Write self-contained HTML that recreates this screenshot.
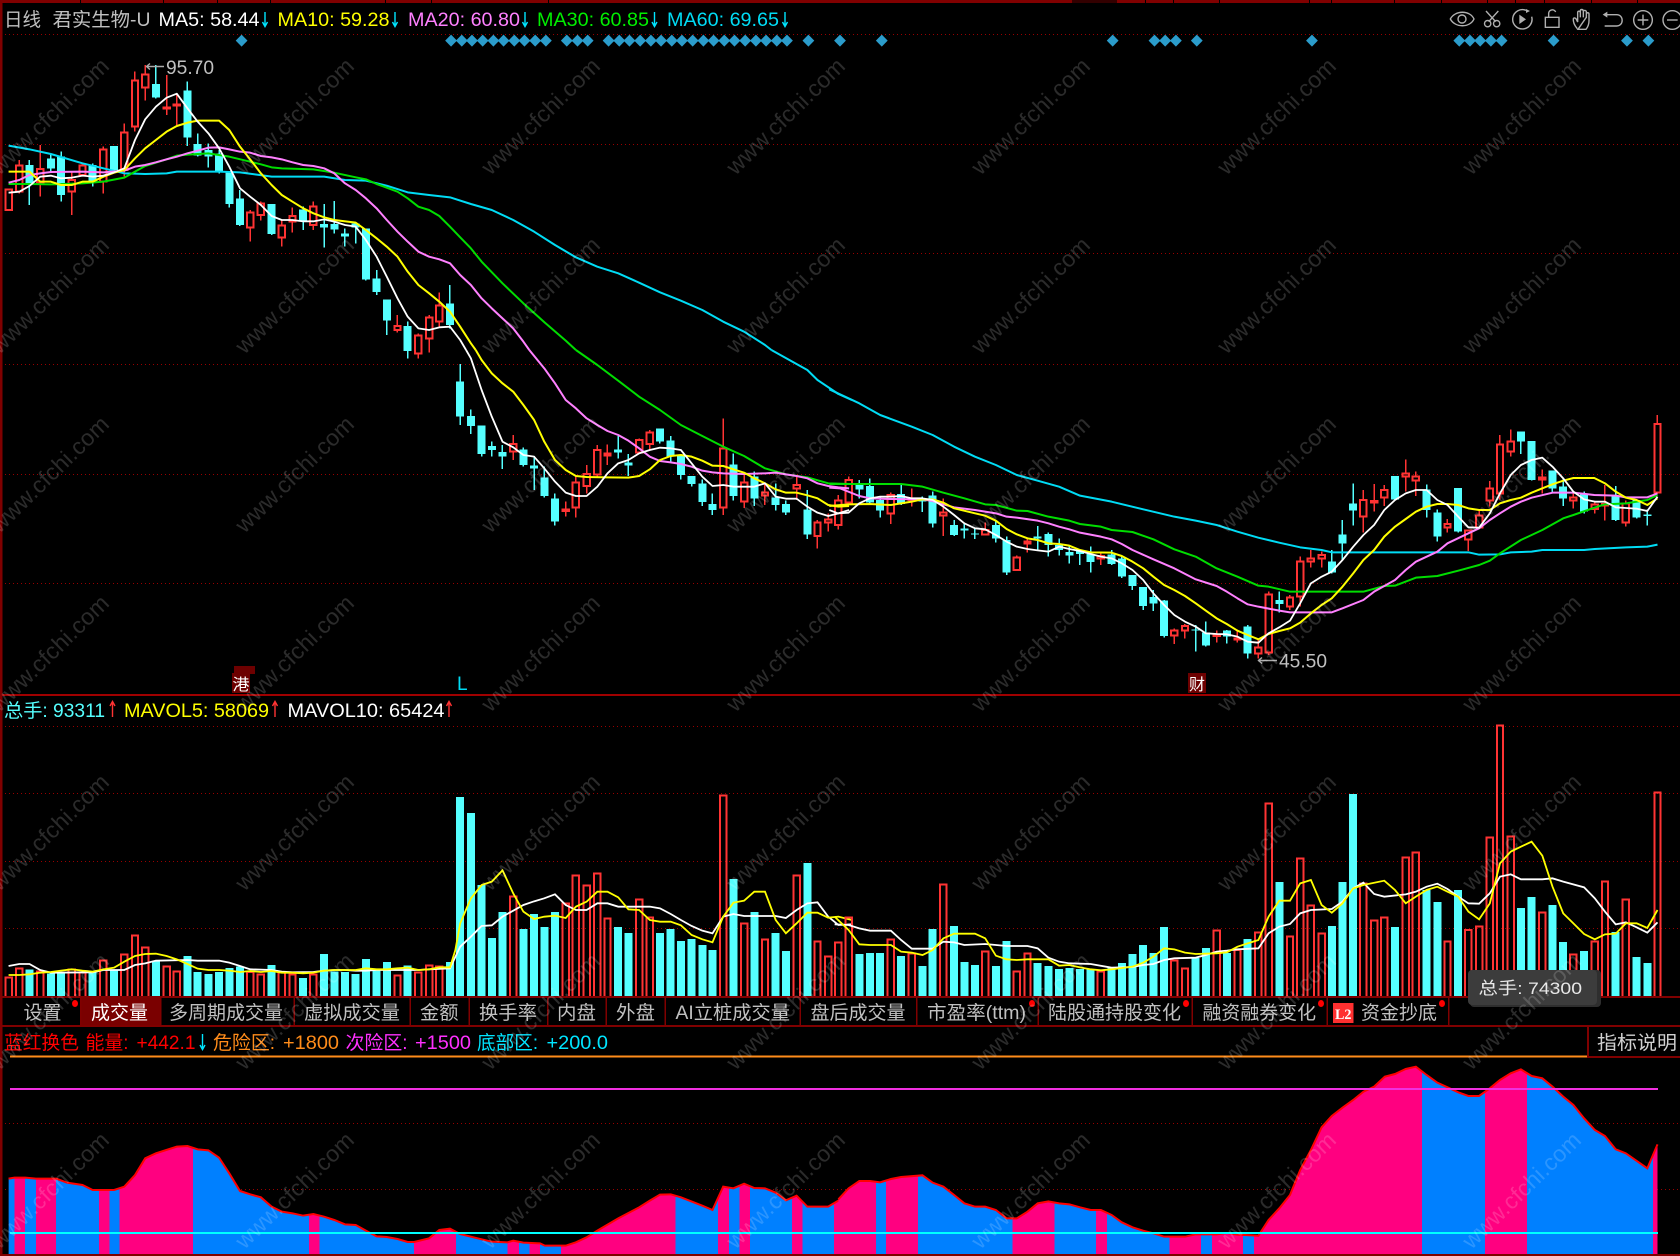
<!DOCTYPE html>
<html lang="zh-CN"><head><meta charset="utf-8"><title>日线 君实生物-U</title>
<style>
html,body{margin:0;padding:0;background:#000;width:1680px;height:1256px;overflow:hidden}
svg{display:block;font-family:"Liberation Sans","Noto Sans CJK SC",sans-serif}
svg *{vector-effect:non-scaling-stroke}
.n{fill:none}
.cw{fill:none;stroke:#55ffff;stroke-width:1.5}
.cb{fill:none;stroke:#55ffff;stroke-width:8}
.rw{fill:none;stroke:#ff3333;stroke-width:1.5}
.rb{fill:#000;stroke:#ff3333;stroke-width:2}
.vr{fill:none;stroke:#ff3333;stroke-width:2}
.wm{font-size:23px;fill:#fff;fill-opacity:.17;font-family:"Liberation Sans",sans-serif}
.tab{font-size:19px;fill:#c0c0c0}
.grid{stroke:#990000;stroke-width:1;stroke-dasharray:1 3;fill:none}
.bd{fill:#800000}
.ic{fill:none;stroke:#b0b0b0;stroke-width:1.4}
</style></head><body>
<svg xmlns="http://www.w3.org/2000/svg" width="1680" height="1256" viewBox="0 0 1680 1256">
<rect width="1680" height="1256" fill="#000"/>

<!-- grid -->
<path class="grid" d="M5 34.5H1678M5 144.5H1678M5 253.5H1678M5 364.5H1678M5 474.5H1678M5 583.5H1678M5 726.5H1678M5 793.5H1678M5 861.5H1678M5 928.5H1678M5 1123.5H1678M5 1189.5H1678"/>

<!-- borders -->
<rect class="bd" x="0" y="0" width="1680" height="3"/>
<rect x="80" y="0" width="1" height="3" fill="#000"/><rect x="163" y="0" width="1" height="3" fill="#000"/><rect x="217" y="0" width="1" height="3" fill="#000"/><rect x="270" y="0" width="1" height="3" fill="#000"/><rect x="385" y="0" width="1" height="3" fill="#000"/><rect x="431" y="0" width="1" height="3" fill="#000"/><rect x="548" y="0" width="1" height="3" fill="#000"/><rect x="1072" y="0" width="45" height="3" fill="#300"/><rect x="1145" y="0" width="1" height="3" fill="#000"/><rect x="1173" y="0" width="1" height="3" fill="#000"/><rect x="1219" y="0" width="1" height="3" fill="#000"/><rect x="1309" y="0" width="1" height="3" fill="#000"/><rect x="1331" y="0" width="1" height="3" fill="#000"/><rect x="1394" y="0" width="1" height="3" fill="#000"/><rect x="1441" y="0" width="1" height="3" fill="#000"/><rect x="1487" y="0" width="1" height="3" fill="#000"/><rect x="1515" y="0" width="1" height="3" fill="#000"/><rect x="1544" y="0" width="1" height="3" fill="#000"/><rect x="1591" y="0" width="1" height="3" fill="#000"/><rect x="1637" y="0" width="1" height="3" fill="#000"/>

<!-- diamonds -->
<g transform="scale(.535714,.333333)" fill="#2b9ccb"><path d="M451 104l11 18-11 18-11-18zM842 104l11 18-11 18-11-18zM862 104l11 18-11 18-11-18zM881 104l11 18-11 18-11-18zM901 104l11 18-11 18-11-18zM921 104l11 18-11 18-11-18zM940 104l11 18-11 18-11-18zM960 104l11 18-11 18-11-18zM979 104l11 18-11 18-11-18zM999 104l11 18-11 18-11-18zM1019 104l11 18-11 18-11-18zM1058 104l11 18-11 18-11-18zM1078 104l11 18-11 18-11-18zM1097 104l11 18-11 18-11-18zM1136 104l11 18-11 18-11-18zM1156 104l11 18-11 18-11-18zM1175 104l11 18-11 18-11-18zM1195 104l11 18-11 18-11-18zM1215 104l11 18-11 18-11-18zM1234 104l11 18-11 18-11-18zM1254 104l11 18-11 18-11-18zM1273 104l11 18-11 18-11-18zM1293 104l11 18-11 18-11-18zM1313 104l11 18-11 18-11-18zM1332 104l11 18-11 18-11-18zM1352 104l11 18-11 18-11-18zM1371 104l11 18-11 18-11-18zM1391 104l11 18-11 18-11-18zM1411 104l11 18-11 18-11-18zM1430 104l11 18-11 18-11-18zM1450 104l11 18-11 18-11-18zM1469 104l11 18-11 18-11-18zM1509 104l11 18-11 18-11-18zM1568 104l11 18-11 18-11-18z"/></g>
<g transform="translate(840,0) scale(.535714,.333333)" fill="#2b9ccb"><path d="M78 104l11 18-11 18-11-18zM509 104l11 18-11 18-11-18zM587 104l11 18-11 18-11-18zM607 104l11 18-11 18-11-18zM627 104l11 18-11 18-11-18zM666 104l11 18-11 18-11-18zM881 104l11 18-11 18-11-18zM1156 104l11 18-11 18-11-18zM1176 104l11 18-11 18-11-18zM1195 104l11 18-11 18-11-18zM1215 104l11 18-11 18-11-18zM1235 104l11 18-11 18-11-18zM1332 104l11 18-11 18-11-18zM1469 104l11 18-11 18-11-18zM1509 104l11 18-11 18-11-18z"/></g>

<!-- candles tile 1 -->
<g transform="scale(.535714,.333333)" shape-rendering="crispEdges">
<path class="cw" d="M55 480V615M95 460V515M114 455V605M173 490V560M213 438V515M291 195V295M350 245V438M369 400V470M389 430V503M409 450V520M428 515V622M448 570V678M507 612V705M566 620V690M605 612V743M624 603V700M644 685V740M664 675V730M683 685V842M703 810V885M722 898V1005M761 965V1075M840 855V985"/>
<path class="cb" d="M55 495V550M95 475V505M114 470V585M173 495V545M213 438V510M291 252V292M350 272V413M369 432V467M389 450V470M409 460V515M428 515V612M448 595V675M507 612V702M566 628V662M605 672V682M624 672V688M644 700V710M664 670V682M683 685V838M703 836V876M722 898V962M761 978V1053M840 910V975"/>
<path class="rw" d="M16 568V632M36 480V580M75 435V590M134 515V645M154 490V530M193 440V580M232 370V530M252 215V395M271 195V302M311 225V345M330 280V375M467 630V725M487 605V662M526 660V740M546 622V698M585 605V690M742 945V998M781 1000V1075M801 945V1058M820 878V980"/>
<path class="rb" d="M10 568h12V630h-12zM30 497h12V575h-12zM69 507h12V548h-12zM128 540h12V575h-12zM148 497h12V525h-12zM187 448h12V545h-12zM226 398h12V510h-12zM246 242h12V380h-12zM265 224h12V262h-12zM305 322h12V325h-12zM324 313h12V317h-12zM461 637h12V682h-12zM481 610h12V645h-12zM520 676h12V712h-12zM540 648h12V665h-12zM579 620h12V675h-12zM736 978h12V990h-12zM775 1007h12V1060h-12zM795 952h12V1015h-12zM814 917h12V965h-12z"/>
</g>
<!-- candles tile 3 -->
<g transform="translate(0,350) scale(.535714,.333333)" shape-rendering="crispEdges">
<path class="cw" d="M859 42V225M879 178V252M899 226V320M918 275V320M938 285V357M977 292V350M997 318V420M1016 350V442M1036 430V527M1154 258V325M1173 312V378M1232 235V280M1252 258V335M1271 318V388M1291 378V410M1311 388V468M1330 430V495M1369 310V452M1408 365V468M1448 400V482M1467 452V495M1507 420V567"/>
<path class="cb" d="M859 94V200M879 198V228M899 226V312M918 288V300M938 306V320M977 298V345M997 346V356M1016 382V438M1036 445V515M1154 298V308M1173 337V347M1232 235V275M1252 271V320M1271 318V375M1291 378V402M1311 400V456M1330 462V480M1369 343V438M1408 380V446M1448 442V465M1467 462V488M1507 478V553"/>
<path class="rw" d="M958 255V330M1056 455V500M1075 380V503M1095 345V430M1115 285V380M1134 283V345M1193 265V312M1213 240V300M1350 205V495M1389 375V474M1428 400V465M1487 380V450M1526 510V595M1546 490V545M1565 435V538"/>
<path class="rb" d="M952 282h12V305h-12zM1050 478h12V483h-12zM1069 397h12V472h-12zM1089 372h12V408h-12zM1109 300h12V373h-12zM1128 310h12V316h-12zM1187 270h12V308h-12zM1207 247h12V282h-12zM1344 295h12V472h-12zM1383 398h12V455h-12zM1422 427h12V437h-12zM1481 405h12V416h-12zM1520 517h12V558h-12zM1540 508h12V518h-12zM1559 452h12V525h-12z"/>
</g>
<!-- candles tile 4 -->
<g transform="translate(840,350) scale(.535714,.333333)" shape-rendering="crispEdges">
<path class="cw" d="M36 390V445M56 385V460M75 440V503M114 405V465M154 440V486M173 425V532M213 510V558M232 517V565M252 535V567M291 515V578M311 560V675M369 528V598M389 548V620M409 565V617M428 590V640M448 600V645M468 590V667M507 600V645M526 620V684M546 675V720M566 711V780M585 720V783M605 750V862M664 825V905M683 815V890M722 840V880M761 825V925M820 725V787M918 600V670M938 510V630M958 400V527M1036 378V450M1095 403V503M1115 478V575M1154 414V548M1271 244V312M1291 273V392M1330 362V430M1350 385V468M1389 425V490M1448 408V513M1487 450V505M1507 478V527"/>
<path class="cb" d="M36 405V418M56 408V458M75 450V482M114 432V462M154 448V455M173 437V520M213 525V555M232 535V542M252 550V553M291 525V565M311 570V668M369 560V566M389 552V585M409 585V600M428 606V616M448 603V612M468 612V636M507 613V642M526 625V680M546 675V708M566 711V768M585 741V760M605 752V858M664 838V842M683 847V887M722 842V860M761 830V910M820 750V762M918 634V667M938 553V580M958 460V482M1036 378V448M1095 418V480M1115 488V560M1154 414V545M1271 244V275M1291 273V390M1330 362V415M1350 410V446M1389 432V484M1448 438V510M1487 450V502M1507 494V498"/>
<path class="rw" d="M16 380V463M95 427V522M134 415V470M193 445V558M271 517V555M330 617V662M350 567V608M487 608V645M624 835V882M644 822V865M703 842V878M742 838V878M781 865V925M800 725V915M840 735V780M859 620V770M879 600V653M899 605V653M977 420V548M997 402V485M1016 405V468M1056 328V425M1075 365V438M1134 507V548M1173 540V603M1193 480V535M1213 393V470M1232 255V448M1252 238V320M1311 358V430M1369 425V475M1409 455V490M1428 405V512M1467 452V530M1526 195V430"/>
<path class="rb" d="M10 390h12V458h-12zM89 435h12V490h-12zM128 445h12V450h-12zM187 488h12V497h-12zM265 540h12V553h-12zM324 622h12V660h-12zM344 575h12V580h-12zM481 618h12V626h-12zM618 842h12V857h-12zM638 828h12V842h-12zM697 853h12V858h-12zM736 865h12V868h-12zM775 892h12V910h-12zM794 733h12V907h-12zM834 742h12V770h-12zM853 634h12V740h-12zM873 625h12V635h-12zM893 615h12V625h-12zM971 450h12V500h-12zM991 453h12V458h-12zM1010 420h12V442h-12zM1050 370h12V380h-12zM1069 380h12V392h-12zM1128 522h12V533h-12zM1167 542h12V568h-12zM1187 497h12V533h-12zM1207 415h12V452h-12zM1226 284h12V430h-12zM1246 275h12V305h-12zM1305 382h12V388h-12zM1363 442h12V452h-12zM1403 463h12V477h-12zM1422 462h12V467h-12zM1461 460h12V517h-12zM1520 222h12V427h-12z"/>
</g>

<!-- MA lines -->
<g transform="scale(.535714,.333333)" fill="none" stroke-linejoin="round">
<polyline stroke="#00dcf5" stroke-width="2" points="16,437 55,448 95,462 154,490 193,505 232,520 271,522 311,520 330,515 409,515 448,517 507,530 605,530 644,540 683,542 722,557 761,577 801,585 840,592 879,612 918,630 958,660 997,695 1036,735 1075,772 1115,800 1154,820 1193,848 1232,877 1271,902 1311,930 1350,965 1389,995 1428,1035 1440,1050"/>
<polyline stroke="#00dd00" stroke-width="2" points="16,552 55,552 95,553 154,550 193,545 232,533 252,515 271,498 291,488 311,478 330,467 350,464 389,460 428,470 467,485 487,493 507,502 526,505 585,508 624,518 664,532 683,538 703,552 742,575 761,595 781,620 801,630 820,648 840,680 859,712 879,745 899,785 938,850 977,910 1017,968 1056,1022 1075,1050"/>
<polyline stroke="#ff80ff" stroke-width="2" points="16,548 36,540 55,525 75,520 95,516 154,515 193,517 232,512 252,500 271,495 291,487 311,478 330,470 350,460 369,452 389,443 409,442 428,448 448,455 467,458 487,468 507,472 526,478 546,487 566,495 585,498 605,505 624,520 644,550 664,570 683,595 703,625 722,660 742,695 761,725 781,755 801,770 820,778 840,790 859,825 879,855 899,895 918,925 938,955 958,985 977,1025 988,1050"/>
<polyline stroke="#ffff00" stroke-width="2" points="16,515 55,515 75,545 95,545 114,555 134,555 154,545 173,545 193,530 213,518 232,510 252,475 271,445 291,420 311,395 330,378 350,368 369,362 409,362 428,390 448,440 467,478 487,520 507,555 526,585 546,605 566,625 585,640 605,652 624,660 664,668 683,690 703,715 722,740 742,770 761,815 781,855 801,880 820,905 840,935 859,980 879,1030 888,1050"/>
<polyline stroke="#ffffff" stroke-width="1.8" points="16,578 36,575 55,558 75,530 95,527 114,535 134,533 154,527 173,530 193,527 213,517 232,505 252,420 271,358 291,320 311,293 330,281 350,325 369,365 389,400 409,445 428,500 448,565 467,590 487,615 507,648 526,660 546,660 566,664 585,664 605,658 624,665 644,675 664,680 683,720 703,770 722,830 742,895 761,950 781,985 801,990 820,982 840,980 859,1020 870,1050"/>
</g>
<g transform="translate(0,350) scale(.535714,.333333)" fill="none" stroke-linejoin="round">
<polyline stroke="#00dcf5" stroke-width="2" points="1440,0 1507,60 1526,90 1565,132 1590,150"/>
<polyline stroke="#00dd00" stroke-width="2" points="1075,0 1115,45 1154,92 1193,140 1232,180 1271,225 1311,258 1350,290 1389,318 1428,355 1467,373 1507,382 1546,400 1585,402"/>
<polyline stroke="#ff80ff" stroke-width="2" points="988,0 1016,55 1036,100 1056,150 1075,175 1095,205 1115,225 1134,243 1154,255 1173,272 1193,295 1213,320 1232,333 1252,337 1271,342 1291,350 1311,362 1330,367 1350,370 1389,372 1428,370 1448,368 1467,373 1487,378 1507,385 1526,400 1546,408 1565,412 1585,415"/>
<polyline stroke="#ffff00" stroke-width="2" points="888,0 899,30 918,70 938,100 958,125 977,165 997,210 1016,275 1036,330 1056,360 1075,378 1095,381 1134,382 1173,383 1193,378 1213,358 1232,330 1252,318 1271,315 1291,320 1311,332 1330,347 1350,348 1369,358 1389,368 1408,385 1428,400 1448,418 1467,428 1487,428 1507,436 1526,445 1546,465 1565,470 1585,468"/>
<polyline stroke="#ffffff" stroke-width="1.8" points="870,0 879,25 899,120 918,200 938,275 958,292 977,315 997,320 1016,355 1036,395 1056,428 1075,438 1095,438 1115,410 1134,370 1154,340 1173,330 1193,310 1213,300 1232,293 1252,295 1271,300 1291,340 1311,380 1330,408 1350,405 1369,410 1408,410 1428,400 1448,440 1467,446 1487,446 1507,470 1526,488 1546,498 1565,490 1585,480"/>
</g>
<g transform="translate(840,350) scale(.535714,.333333)" fill="none" stroke-linejoin="round">
<polyline stroke="#00dcf5" stroke-width="2" points="-20,118 36,160 75,195 134,230 173,255 213,290 252,320 291,345 330,375 369,392 409,410 448,437 507,455 566,478 624,500 664,512 703,525 742,545 781,563 820,578 859,592 899,600 918,607 1173,607 1193,614 1232,613 1252,607 1291,605 1311,600 1389,600 1409,597 1467,592 1507,590 1526,584"/>
<polyline stroke="#00dd00" stroke-width="2" points="-20,402 114,402 154,410 193,428 232,445 271,463 291,465 330,482 350,483 389,500 428,512 448,522 487,530 507,540 546,546 585,568 624,598 664,620 703,655 742,680 781,707 800,710 840,725 977,725 1016,708 1036,707 1075,683 1115,678 1154,662 1193,645 1213,632 1232,610 1271,570 1311,540 1350,505 1369,495 1408,473 1428,463 1467,460 1507,450 1526,435"/>
<polyline stroke="#ff80ff" stroke-width="2" points="-20,413 0,415 36,438 56,445 95,447 154,448 173,453 193,463 213,472 252,480 291,490 311,500 330,503 369,512 389,520 409,530 428,538 448,548 487,560 507,568 526,582 546,600 585,628 624,655 664,688 703,708 722,725 742,745 761,763 781,770 820,782 840,787 918,787 938,775 977,750 997,725 1016,708 1036,690 1056,660 1075,635 1115,605 1134,580 1173,550 1193,535 1213,510 1232,490 1252,470 1271,455 1291,443 1330,428 1369,428 1408,435 1448,437 1467,442 1507,442 1526,430"/>
<polyline stroke="#ffff00" stroke-width="2" points="-20,468 16,463 56,462 95,465 134,455 154,448 173,448 193,458 213,475 252,490 271,497 291,512 311,537 330,553 350,565 369,570 389,580 409,582 428,587 448,600 468,607 507,608 526,618 546,635 566,655 585,680 605,705 624,720 644,738 664,760 683,782 703,805 722,822 742,842 761,855 781,868 800,852 820,843 840,835 859,818 879,790 899,765 918,745 938,710 958,670 977,630 997,600 1016,560 1036,530 1056,507 1075,485 1095,470 1115,462 1134,462 1154,465 1173,475 1193,480 1213,480 1232,460 1252,450 1271,443 1291,428 1311,415 1330,403 1350,392 1369,384 1408,384 1428,400 1448,425 1467,443 1487,450 1507,465 1526,445"/>
<polyline stroke="#ffffff" stroke-width="1.8" points="-20,480 -4,490 16,488 36,460 56,445 75,440 95,440 114,438 134,445 154,445 173,450 193,470 213,495 232,520 252,535 271,538 291,555 311,575 330,590 350,597 369,601 389,605 409,590 428,597 448,603 468,612 487,620 507,625 526,640 546,660 566,690 585,730 605,765 624,795 644,815 664,830 683,850 703,852 722,853 742,860 761,875 781,878 800,850 820,832 840,812 859,760 879,700 899,680 918,665 938,630 958,590 977,555 997,525 1016,480 1036,450 1056,430 1075,420 1095,420 1115,450 1134,465 1154,500 1173,532 1193,533 1213,490 1232,430 1252,375 1271,345 1291,330 1311,323 1330,350 1350,385 1369,425 1389,448 1409,455 1428,455 1448,472 1467,474 1487,476 1507,483 1526,440"/>
</g>

<!-- volume tile 5 -->
<g transform="translate(0,690) scale(.535714,.333333)">
<g shape-rendering="crispEdges">
<path class="cb" d="M55 838V918M95 850V918M114 850V918M173 848V918M213 838V918M291 815V918M350 798V918M369 846V918M389 852V918M409 846V918M428 834V918M448 830V918M507 825V918M566 864V918M605 792V918M624 845V918M644 846V918M664 852V918M683 807V918M703 840V918M722 816V918M761 826V918M840 816V918M859 321V918M879 369V918M899 585V918M918 744V918M938 666V918M977 717V918M997 672V918M1016 711V918M1036 666V918M1154 711V918M1173 729V918M1232 729V918M1252 717V918M1271 753V918M1291 747V918M1311 765V918M1330 780V918M1369 567V918M1408 666V918M1448 729V918M1467 783V918M1507 519V918"/>
<path class="vr" d="M10 918V862h12V918M30 918V835h12V918M69 918V845h12V918M128 918V838h12V918M148 918V848h12V918M187 918V812h12V918M226 918V793h12V918M246 918V737h12V918M265 918V772h12V918M305 918V830h12V918M324 918V845h12V918M461 918V846h12V918M481 918V853h12V918M520 918V848h12V918M540 918V853h12V918M579 918V853h12V918M736 918V856h12V918M775 918V848h12V918M795 918V826h12V918M814 918V829h12V918M952 918V619h12V918M1050 918V640h12V918M1069 918V557h12V918M1089 918V587h12V918M1109 918V550h12V918M1128 918V686h12V918M1187 918V628h12V918M1207 918V682h12V918M1344 918V316h12V918M1383 918V700h12V918M1422 918V748h12V918M1481 918V557h12V918M1520 918V755h12V918M1540 918V799h12V918M1559 918V758h12V918"/>
</g>
<polyline fill="none" stroke="#fff" stroke-width="1.8" points="16,828 36,822 55,822 75,840 95,848 173,847 193,840 232,840 252,825 271,820 291,812 350,810 369,812 409,812 428,818 448,828 467,838 507,840 526,845 546,847 585,846 605,842 624,840 644,840 664,842 683,842 703,840 781,840 801,838 840,835 859,770 879,740 899,708 918,706 938,680 958,662 977,645 997,634 1016,625 1036,613 1056,645 1075,660 1095,660 1115,640 1134,640 1154,650 1213,650 1232,655 1252,672 1271,690 1291,708 1311,722 1330,730 1350,680 1369,672 1389,678 1448,678 1467,684 1487,660 1507,640 1526,637 1546,680 1565,705 1590,703"/>
<polyline fill="none" stroke="#ffff00" stroke-width="1.8" points="16,855 36,855 55,853 75,848 95,846 114,842 134,838 154,842 173,845 193,838 213,833 232,815 252,798 271,792 291,791 311,798 330,808 350,822 369,836 389,840 409,840 428,842 448,846 467,843 487,846 507,843 526,848 546,848 566,850 585,848 605,842 624,840 664,840 683,835 703,838 722,838 742,835 761,833 781,840 801,838 820,832 840,832 850,780 859,700 879,625 899,585 918,575 938,541 958,610 977,665 997,687 1016,680 1036,677 1056,684 1075,650 1095,635 1115,605 1134,605 1154,622 1173,658 1193,660 1213,690 1232,695 1252,695 1271,706 1291,735 1311,748 1330,757 1350,680 1369,638 1389,632 1408,605 1428,605 1448,690 1467,730 1487,700 1507,668 1526,668 1546,683 1565,680 1590,690"/>
</g>
<!-- volume tile 6 -->
<g transform="translate(840,690) scale(.535714,.333333)">
<g shape-rendering="crispEdges">
<path class="cb" d="M36 792V918M56 789V918M75 789V918M114 798V918M154 828V918M173 717V918M213 708V918M232 816V918M252 825V918M291 828V918M311 753V918M369 819V918M389 828V918M409 837V918M428 834V918M448 837V918M468 837V918M507 831V918M526 819V918M546 792V918M566 765V918M585 789V918M605 711V918M664 804V918M683 774V918M722 789V918M761 747V918M820 576V918M918 708V918M938 576V918M958 312V918M1036 711V918M1095 600V918M1115 636V918M1154 600V918M1271 654V918M1291 621V918M1330 645V918M1350 756V918M1389 783V918M1448 726V918M1487 801V918M1507 819V918"/>
<path class="vr" d="M10 918V682h12V918M89 918V748h12V918M128 918V790h12V918M187 918V583h12V918M265 918V784h12V918M324 918V844h12V918M344 918V790h12V918M481 918V845h12V918M618 918V811h12V918M638 918V835h12V918M697 918V721h12V918M736 918V780h12V918M775 918V727h12V918M794 918V340h12V918M834 918V739h12V918M853 918V505h12V918M873 918V646h12V918M893 918V730h12V918M971 918V580h12V918M991 918V691h12V918M1010 918V682h12V918M1050 918V502h12V918M1069 918V487h12V918M1128 918V754h12V918M1167 918V720h12V918M1187 918V709h12V918M1207 918V442h12V918M1226 918V106h12V918M1246 918V439h12V918M1305 918V667h12V918M1363 918V793h12V918M1403 918V755h12V918M1422 918V575h12V918M1461 918V628h12V918M1520 918V307h12V918"/>
</g>
<polyline fill="none" stroke="#fff" stroke-width="1.8" points="-10,703 16,705 36,715 56,722 95,722 114,750 134,776 173,776 193,755 213,757 232,765 271,762 311,768 350,768 369,775 389,803 409,815 428,820 468,822 507,833 546,831 566,825 585,822 605,810 624,805 664,803 683,795 703,785 722,782 742,778 781,775 800,730 820,710 840,702 859,670 879,660 918,657 938,635 958,595 977,578 997,612 1016,620 1056,613 1075,605 1095,590 1115,581 1134,597 1154,620 1173,640 1193,641 1213,610 1232,560 1252,553 1271,568 1311,568 1330,565 1350,575 1389,592 1409,625 1428,665 1448,703 1467,697 1487,712 1507,728 1526,697"/>
<polyline fill="none" stroke="#ffff00" stroke-width="1.8" points="-10,680 16,720 36,763 56,765 95,765 114,785 134,788 154,795 173,780 193,745 213,731 252,731 271,745 291,797 311,808 330,810 350,808 389,808 409,827 428,825 448,832 468,838 487,841 507,838 546,830 566,818 585,800 605,775 624,778 644,788 664,792 703,790 722,787 742,770 761,760 781,750 800,680 820,632 840,632 859,580 879,570 899,645 918,668 938,640 958,595 977,585 1016,572 1036,600 1056,640 1075,620 1095,600 1115,590 1134,605 1154,620 1173,665 1193,688 1213,640 1232,520 1252,485 1271,470 1291,455 1311,497 1330,590 1350,670 1369,700 1389,732 1409,748 1428,733 1448,731 1467,700 1487,700 1507,714 1526,660"/>
</g>

<!-- panel separators -->
<rect x="0" y="694" width="1680" height="2" fill="#a00000"/>
<rect x="0" y="996" width="1680" height="2" fill="#800000"/>
<rect x="0" y="1025" width="1680" height="2" fill="#800000"/>
<rect x="80" y="998" width="80" height="27" fill="#7a0000"/>
<path fill="#800000" d="M80 998h1.500v27h-1.500zM160 998h1.500v27h-1.500zM293.500 998h1.500v27h-1.500zM409.500 998h1.500v27h-1.500zM468.500 998h1.500v27h-1.500zM547 998h1.500v27h-1.500zM605.500 998h1.500v27h-1.500zM664.500 998h1.500v27h-1.500zM799.500 998h1.500v27h-1.500zM916 998h1.500v27h-1.500zM1037.500 998h1.500v27h-1.500zM1191.500 998h1.500v27h-1.500zM1326.500 998h1.500v27h-1.500zM1448 998h1.500v27h-1.500z"/>

<!-- lower indicator panel -->
<defs>
<clipPath id="c7"><path d="M16 792V566L27 563L47 563L67 566L105 566L125 578L154 585L173 600L213 600L232 590L252 555L271 505L291 490L330 470L350 468L369 478L389 481L409 503L428 550L448 603L467 613L487 622L507 650L526 665L546 670L566 677L585 672L605 680L624 690L644 703L664 705L683 722L703 739L722 741L742 747L761 756L773 756L801 745L820 720L840 716L859 732L879 740L899 748L918 755L947 757L958 752L977 758L1008 760L1017 767L1056 767L1075 757L1095 742L1115 722L1154 685L1193 652L1213 632L1232 614L1252 613L1271 622L1311 647L1330 660L1350 590L1369 595L1389 581L1408 594L1428 595L1448 608L1467 631L1487 617L1507 650L1546 650L1570 627V792Z"/></clipPath>
<clipPath id="c8"><path d="M-3 792V628L16 595L36 573L56 573L75 577L95 567L114 561L154 556L173 578L193 590L213 615L232 640L252 650L271 650L291 660L311 685L330 685L350 665L369 640L389 634L409 640L428 643L448 652L468 660L487 660L507 675L526 697L546 712L566 722L585 730L605 740L644 740L664 733L703 733L722 729L742 734L781 737L800 690L820 655L840 615L859 540L879 480L899 412L918 378L938 353L958 330L977 305L997 290L1017 260L1036 252L1056 237L1075 230L1095 255L1115 278L1134 292L1154 307L1173 318L1193 318L1213 295L1232 270L1252 250L1271 238L1291 258L1311 265L1330 290L1350 320L1369 345L1389 385L1409 420L1428 438L1448 478L1467 490L1507 535L1526 463V792Z"/></clipPath>
</defs>
<g transform="translate(0,990) scale(.535714,.333333)">
<g clip-path="url(#c7)" shape-rendering="crispEdges">
<path fill="#0080ff" d="M16 400H1570V792H16z"/>
<path fill="#ff0080" d="M27 400H47V792H27zM67 400H105V792H67zM185 400H204V792H185zM223 400H360V792H223zM577 400H596V792H577zM773 400H851V792H773zM947 400H969V792H947zM988 400H1008V792H988zM1047 400H1261V792H1047zM1340 400H1361V792H1340zM1380 400H1400V792H1380zM1478 400H1498V792H1478zM1557 400H1570V792H1557z"/>
</g>
<polyline fill="none" stroke="#ff0000" stroke-width="2" points="16,566 27,563 47,563 67,566 105,566 125,578 154,585 173,600 213,600 232,590 252,555 271,505 291,490 330,470 350,468 369,478 389,481 409,503 428,550 448,603 467,613 487,622 507,650 526,665 546,670 566,677 585,672 605,680 624,690 644,703 664,705 683,722 703,739 722,741 742,747 761,756 773,756 801,745 820,720 840,716 859,732 879,740 899,748 918,755 947,757 958,752 977,758 1008,760 1017,767 1056,767 1075,757 1095,742 1115,722 1154,685 1193,652 1213,632 1232,614 1252,613 1271,622 1311,647 1330,660 1350,590 1369,595 1389,581 1408,594 1428,595 1448,608 1467,631 1487,617 1507,650 1546,650 1570,627"/>
</g>
<g transform="translate(840,990) scale(.535714,.333333)">
<g clip-path="url(#c8)" shape-rendering="crispEdges">
<path fill="#0080ff" d="M-3 200H1526V792H-3z"/>
<path fill="#ff0080" d="M-3 200H67V792H-3zM86 200H146V792H86zM322 200H400V792H322zM478 200H498V792H478zM615 200H674V792H615zM694 200H752V792H694zM773 200H1086V792H773zM1204 200H1282V792H1204zM1518 200H1526V792H1518z"/>
</g>
<polyline fill="none" stroke="#ff0000" stroke-width="2" points="-3,628 16,595 36,573 56,573 75,577 95,567 114,561 154,556 173,578 193,590 213,615 232,640 252,650 271,650 291,660 311,685 330,685 350,665 369,640 389,634 409,640 428,643 448,652 468,660 487,660 507,675 526,697 546,712 566,722 585,730 605,740 644,740 664,733 703,733 722,729 742,734 781,737 800,690 820,655 840,615 859,540 879,480 899,412 918,378 938,353 958,330 977,305 997,290 1017,260 1036,252 1056,237 1075,230 1095,255 1115,278 1134,292 1154,307 1173,318 1193,318 1213,295 1232,270 1252,250 1271,238 1291,258 1311,265 1330,290 1350,320 1369,345 1389,385 1409,420 1428,438 1448,478 1467,490 1507,535 1526,463"/>
</g>
<rect x="10" y="1055.500" width="1577" height="2" fill="#ff8c1a"/>
<rect x="10" y="1088" width="1648" height="2" fill="#f030e0"/>
<rect x="10" y="1232" width="1648" height="2" fill="#00ffff"/>
<rect x="1587" y="1027" width="2" height="30" fill="#800000"/>
<rect x="1587" y="1056" width="93" height="2" fill="#800000"/>

<rect class="bd" x="0" y="1254" width="1680" height="2"/>
<rect class="bd" x="0" y="0" width="2.500" height="1256"/>

<!-- tags -->
<rect x="234" y="666" width="21" height="8" fill="#6d0000"/><rect x="232" y="673" width="18" height="20" fill="#6d0000"/>
<text x="232.500" y="690" font-size="16" fill="#fff" textLength="17" lengthAdjust="spacingAndGlyphs">港</text>
<rect x="1188" y="673" width="18" height="20" fill="#6d0000"/>
<text x="1189" y="690" font-size="16" fill="#fff" textLength="16" lengthAdjust="spacingAndGlyphs">财</text>
<text x="457" y="690" font-size="19" fill="#00dcf5">L</text>

<!-- price labels -->
<path class="n" stroke="#aaa" stroke-width="1.4" d="M146.500 66.500H164M150 63.500L146.500 66.500L150 69.500"/>
<text x="166" y="74" font-size="19" fill="#c0c0c0" textLength="48" lengthAdjust="spacingAndGlyphs">95.70</text>
<path class="n" stroke="#aaa" stroke-width="1.400" d="M1258 660.500H1277M1262 657.500L1258.500 660.500L1262 663.500"/>
<text x="1279" y="667.500" font-size="19" fill="#c0c0c0" textLength="48" lengthAdjust="spacingAndGlyphs">45.50</text>

<!-- header -->
<g font-size="19">
<text x="4" y="26" fill="#c0c0c0" textLength="37" lengthAdjust="spacingAndGlyphs">日线</text>
<text x="52.500" y="26" fill="#c0c0c0" textLength="98" lengthAdjust="spacingAndGlyphs">君实生物-U</text>
<text x="158.500" y="26" fill="#fff" textLength="101" lengthAdjust="spacingAndGlyphs">MA5: 58.44</text>
<text x="277.500" y="26" fill="#ffff00" textLength="112" lengthAdjust="spacingAndGlyphs">MA10: 59.28</text>
<text x="408" y="26" fill="#ff80ff" textLength="112" lengthAdjust="spacingAndGlyphs">MA20: 60.80</text>
<text x="537" y="26" fill="#00ee00" textLength="112" lengthAdjust="spacingAndGlyphs">MA30: 60.85</text>
<text x="667" y="26" fill="#00dcf5" textLength="112" lengthAdjust="spacingAndGlyphs">MA60: 69.65</text>
<path class="n" stroke="#00e5ff" stroke-width="1.400" d="M265 12V26M262.500 22L265 26.500L267.500 22M395 12V26M392.500 22L395 26.500L397.500 22M525 12V26M522.500 22L525 26.500L527.500 22M654.500 12V26M652 22L654.500 26.500L657 22M785 12V26M782.500 22L785 26.500L787.500 22"/>

<text x="4" y="717" fill="#55ffff" textLength="101" lengthAdjust="spacingAndGlyphs">总手: 93311</text>
<text x="124" y="717" fill="#ffff00" textLength="145" lengthAdjust="spacingAndGlyphs">MAVOL5: 58069</text>
<text x="287.500" y="717" fill="#fff" textLength="157" lengthAdjust="spacingAndGlyphs">MAVOL10: 65424</text>
<path class="n" stroke="#ff3333" stroke-width="1.400" d="M112.500 717V702M110 706L112.500 701.500L115 706M275 717V702M272.500 706L275 701.500L277.500 706M449 717V702M446.500 706L449 701.500L451.500 706"/>

<text x="4" y="1049" fill="#ff0000" textLength="75" lengthAdjust="spacingAndGlyphs">蓝红换色</text>
<text x="85.500" y="1049" fill="#ff0000" textLength="43" lengthAdjust="spacingAndGlyphs">能量:</text>
<text x="136.500" y="1049" fill="#ff0000" textLength="59" lengthAdjust="spacingAndGlyphs">+442.1</text>
<path class="n" stroke="#00e5ff" stroke-width="1.400" d="M202.500 1034V1049M200 1045L202.500 1049.500L205 1045"/>
<text x="213" y="1049" fill="#ff8c1a" textLength="62" lengthAdjust="spacingAndGlyphs">危险区:</text>
<text x="283" y="1049" fill="#ff8c1a" textLength="56" lengthAdjust="spacingAndGlyphs">+1800</text>
<text x="345.500" y="1049" fill="#ff30ff" textLength="62" lengthAdjust="spacingAndGlyphs">次险区:</text>
<text x="415" y="1049" fill="#ff30ff" textLength="56" lengthAdjust="spacingAndGlyphs">+1500</text>
<text x="477" y="1049" fill="#00e5ff" textLength="61" lengthAdjust="spacingAndGlyphs">底部区:</text>
<text x="546.500" y="1049" fill="#00e5ff" textLength="61.500" lengthAdjust="spacingAndGlyphs">+200.0</text>
<text x="1597" y="1049" fill="#d0d0d0" textLength="80" lengthAdjust="spacingAndGlyphs">指标说明</text>
</g>

<!-- tabs -->
<g class="tabs">
<text class="tab" x="23.500" y="1019" textLength="38" lengthAdjust="spacingAndGlyphs">设置</text>
<text class="tab" x="91" y="1019" textLength="57" lengthAdjust="spacingAndGlyphs" style="fill:#fff">成交量</text>
<text class="tab" x="169" y="1019" textLength="114" lengthAdjust="spacingAndGlyphs">多周期成交量</text>
<text class="tab" x="304" y="1019" textLength="96" lengthAdjust="spacingAndGlyphs">虚拟成交量</text>
<text class="tab" x="420" y="1019" textLength="38.500" lengthAdjust="spacingAndGlyphs">金额</text>
<text class="tab" x="479" y="1019" textLength="58" lengthAdjust="spacingAndGlyphs">换手率</text>
<text class="tab" x="557" y="1019" textLength="39" lengthAdjust="spacingAndGlyphs">内盘</text>
<text class="tab" x="616" y="1019" textLength="39" lengthAdjust="spacingAndGlyphs">外盘</text>
<text class="tab" x="675.500" y="1019" textLength="114.500" lengthAdjust="spacingAndGlyphs">AI立桩成交量</text>
<text class="tab" x="810.500" y="1019" textLength="95" lengthAdjust="spacingAndGlyphs">盘后成交量</text>
<text class="tab" x="927" y="1019" textLength="99" lengthAdjust="spacingAndGlyphs">市盈率(ttm)</text>
<text class="tab" x="1048" y="1019" textLength="133" lengthAdjust="spacingAndGlyphs">陆股通持股变化</text>
<text class="tab" x="1202.500" y="1019" textLength="113.500" lengthAdjust="spacingAndGlyphs">融资融券变化</text>
<rect x="1333" y="1003" width="20.500" height="20" fill="#ff3030"/>
<text x="1335" y="1019" font-size="15" font-weight="bold" fill="#fff" style="font-family:'Liberation Serif',serif" textLength="16.500" lengthAdjust="spacingAndGlyphs">L2</text>
<text class="tab" x="1361" y="1019" textLength="76" lengthAdjust="spacingAndGlyphs">资金抄底</text>
<g fill="#ff0000"><ellipse cx="75" cy="1003.500" rx="3" ry="3.500"/><ellipse cx="1032" cy="1003.500" rx="3" ry="3.500"/><ellipse cx="1186" cy="1003.500" rx="3" ry="3.500"/><ellipse cx="1321" cy="1003.500" rx="3" ry="3.500"/><ellipse cx="1442" cy="1003.500" rx="3" ry="3.500"/></g>
</g>

<!-- icons -->
<g transform="translate(1440,0) scale(.333333)" class="ic">
<path class="ic" d="M31 57C45 30 90 30 102 57C90 84 45 84 31 57Z"/><circle class="ic" cx="66" cy="57" r="12"/>
<path class="ic" d="M138 33L167 65M175 33L146 65"/><circle class="ic" cx="143" cy="71" r="9.500"/><circle class="ic" cx="170" cy="71" r="9.500"/>
<path class="ic" d="M258 31A29 29 0 1 0 275 50"/><path d="M258 27L270 33L258 39Z" fill="#b0b0b0" stroke="none"/><path d="M238 44L258 58L238 72Z" fill="#b0b0b0" stroke="none"/>
<rect class="ic" x="316" y="52" width="41" height="30"/><path class="ic" d="M326 52V40A11 11 0 0 1 347 36"/>
<path class="ic" d="M412 86C405 78 399 66 400 56C402 52 408 54 410 60L413 66V38C413 32 420 32 421 38V52M421 50V33C421 27 429 27 430 33V52M430 50V35C430 30 438 30 439 35V54M439 52V42C439 37 447 37 447 42V62C447 74 443 82 438 88H414Z"/>
<path class="ic" d="M498 44H530C552 44 552 78 530 78H494"/><path d="M488 44L502 35V53Z" fill="#b0b0b0" stroke="none"/>
<circle class="ic" cx="609" cy="60" r="28"/><path class="ic" d="M609 44V76M593 60H625"/>
<circle class="ic" cx="697" cy="60" r="28"/><path class="ic" d="M681 60H713"/>
</g>

<!-- tooltip -->
<rect x="1470" y="970" width="131" height="37" rx="4" fill="#2e2e2e"/>
<rect x="1468" y="970" width="129" height="35" rx="4" fill="#3c3c3c"/>
<text x="1478.500" y="994" font-size="17" fill="#e8e8e8" textLength="103.500" lengthAdjust="spacingAndGlyphs">总手: 74300</text>

<!-- watermark -->
<g class="wm-g" transform="translate(7.500,1)">
<text class="wm" textLength="155" transform="translate(-8 175) rotate(-44.300)">www.cfchi.com</text><text class="wm" textLength="155" transform="translate(237 175) rotate(-44.300)">www.cfchi.com</text><text class="wm" textLength="155" transform="translate(483 175) rotate(-44.300)">www.cfchi.com</text><text class="wm" textLength="155" transform="translate(728 175) rotate(-44.300)">www.cfchi.com</text><text class="wm" textLength="155" transform="translate(973 175) rotate(-44.300)">www.cfchi.com</text><text class="wm" textLength="155" transform="translate(1219 175) rotate(-44.300)">www.cfchi.com</text><text class="wm" textLength="155" transform="translate(1464 175) rotate(-44.300)">www.cfchi.com</text>
<text class="wm" textLength="155" transform="translate(-8 354) rotate(-44.300)">www.cfchi.com</text><text class="wm" textLength="155" transform="translate(237 354) rotate(-44.300)">www.cfchi.com</text><text class="wm" textLength="155" transform="translate(483 354) rotate(-44.300)">www.cfchi.com</text><text class="wm" textLength="155" transform="translate(728 354) rotate(-44.300)">www.cfchi.com</text><text class="wm" textLength="155" transform="translate(973 354) rotate(-44.300)">www.cfchi.com</text><text class="wm" textLength="155" transform="translate(1219 354) rotate(-44.300)">www.cfchi.com</text><text class="wm" textLength="155" transform="translate(1464 354) rotate(-44.300)">www.cfchi.com</text>
<text class="wm" textLength="155" transform="translate(-8 533) rotate(-44.300)">www.cfchi.com</text><text class="wm" textLength="155" transform="translate(237 533) rotate(-44.300)">www.cfchi.com</text><text class="wm" textLength="155" transform="translate(483 533) rotate(-44.300)">www.cfchi.com</text><text class="wm" textLength="155" transform="translate(728 533) rotate(-44.300)">www.cfchi.com</text><text class="wm" textLength="155" transform="translate(973 533) rotate(-44.300)">www.cfchi.com</text><text class="wm" textLength="155" transform="translate(1219 533) rotate(-44.300)">www.cfchi.com</text><text class="wm" textLength="155" transform="translate(1464 533) rotate(-44.300)">www.cfchi.com</text>
<text class="wm" textLength="155" transform="translate(-8 712) rotate(-44.300)">www.cfchi.com</text><text class="wm" textLength="155" transform="translate(237 712) rotate(-44.300)">www.cfchi.com</text><text class="wm" textLength="155" transform="translate(483 712) rotate(-44.300)">www.cfchi.com</text><text class="wm" textLength="155" transform="translate(728 712) rotate(-44.300)">www.cfchi.com</text><text class="wm" textLength="155" transform="translate(973 712) rotate(-44.300)">www.cfchi.com</text><text class="wm" textLength="155" transform="translate(1219 712) rotate(-44.300)">www.cfchi.com</text><text class="wm" textLength="155" transform="translate(1464 712) rotate(-44.300)">www.cfchi.com</text>
<text class="wm" textLength="155" transform="translate(-8 891) rotate(-44.300)">www.cfchi.com</text><text class="wm" textLength="155" transform="translate(237 891) rotate(-44.300)">www.cfchi.com</text><text class="wm" textLength="155" transform="translate(483 891) rotate(-44.300)">www.cfchi.com</text><text class="wm" textLength="155" transform="translate(728 891) rotate(-44.300)">www.cfchi.com</text><text class="wm" textLength="155" transform="translate(973 891) rotate(-44.300)">www.cfchi.com</text><text class="wm" textLength="155" transform="translate(1219 891) rotate(-44.300)">www.cfchi.com</text><text class="wm" textLength="155" transform="translate(1464 891) rotate(-44.300)">www.cfchi.com</text>
<text class="wm" textLength="155" transform="translate(-8 1070) rotate(-44.300)">www.cfchi.com</text><text class="wm" textLength="155" transform="translate(237 1070) rotate(-44.300)">www.cfchi.com</text><text class="wm" textLength="155" transform="translate(483 1070) rotate(-44.300)">www.cfchi.com</text><text class="wm" textLength="155" transform="translate(728 1070) rotate(-44.300)">www.cfchi.com</text><text class="wm" textLength="155" transform="translate(973 1070) rotate(-44.300)">www.cfchi.com</text><text class="wm" textLength="155" transform="translate(1219 1070) rotate(-44.300)">www.cfchi.com</text><text class="wm" textLength="155" transform="translate(1464 1070) rotate(-44.300)">www.cfchi.com</text>
<text class="wm" textLength="155" transform="translate(-8 1249) rotate(-44.300)">www.cfchi.com</text><text class="wm" textLength="155" transform="translate(237 1249) rotate(-44.300)">www.cfchi.com</text><text class="wm" textLength="155" transform="translate(483 1249) rotate(-44.300)">www.cfchi.com</text><text class="wm" textLength="155" transform="translate(728 1249) rotate(-44.300)">www.cfchi.com</text><text class="wm" textLength="155" transform="translate(973 1249) rotate(-44.300)">www.cfchi.com</text><text class="wm" textLength="155" transform="translate(1219 1249) rotate(-44.300)">www.cfchi.com</text><text class="wm" textLength="155" transform="translate(1464 1249) rotate(-44.300)">www.cfchi.com</text>
</g>
</svg>
</body></html>
